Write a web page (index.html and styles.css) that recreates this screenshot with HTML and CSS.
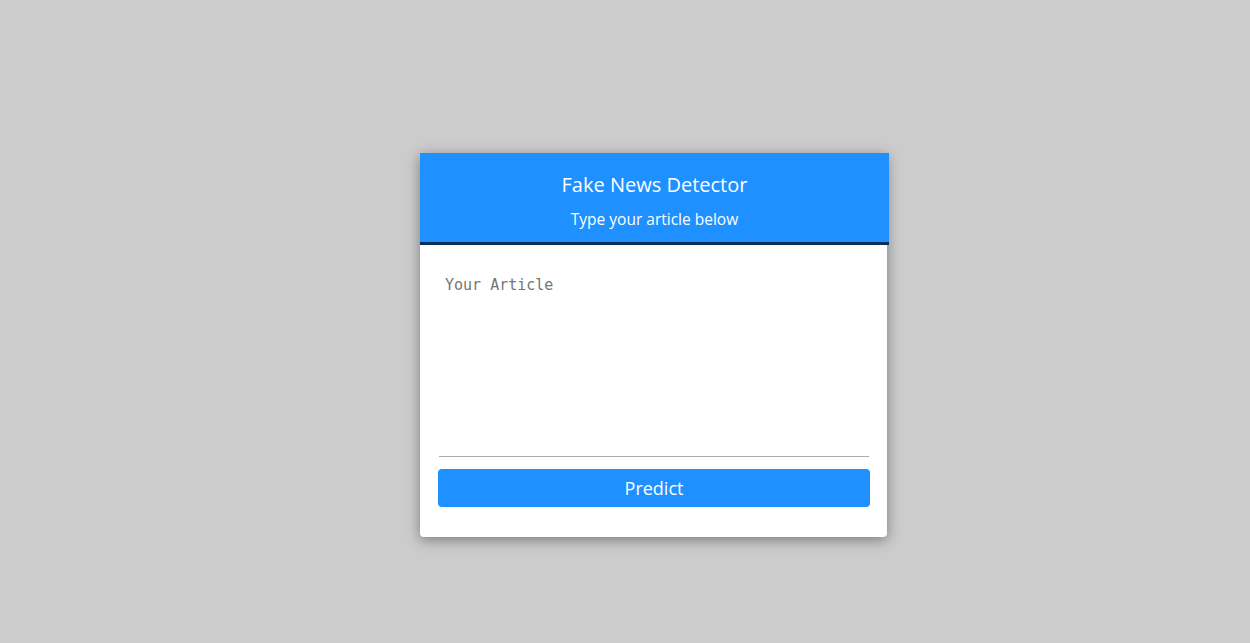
FILE: index.html
```html
<!DOCTYPE html>
<html>
<head>
<meta charset="utf-8">
<link rel="stylesheet" href="styles.css">
</head>
<body>
<div class="page">
  <div class="card">
    <div class="header">
      <h1 class="title">Fake News Detector</h1>
      <p class="subtitle">Type your article below</p>
    </div>
    <form class="body">
      <textarea class="article" placeholder="Your Article"></textarea>
      <button type="button" class="predict">Predict</button>
    </form>
  </div>
</div>
</body>
</html>
```
FILE: styles.css
```css
html, body {
  margin: 0;
  padding: 0;
  height: 100%;
  background: #cccccc;
  font-family: "Open Sans", "Noto Sans", sans-serif;
}
.page {
  padding-top: 153px;
  padding-left: 420px;
}
.card {
  width: 467px;
  background: #ffffff;
  border-radius: 0 0 4px 4px;
  box-shadow: 0 3px 14px rgba(0, 0, 0, 0.4);
}
.header {
  width: 469px;
  box-sizing: border-box;
  background: #1e90ff;
  border-bottom: 3px solid #0b2f55;
  color: #ffffff;
  text-align: center;
  padding-top: 19px;
  height: 92px;
}
.title {
  margin: 0;
  font-size: 20px;
  font-weight: 400;
  line-height: 26px;
}
.subtitle {
  margin: 11px 0 0;
  font-size: 15.5px;
  font-weight: 500;
  line-height: 20px;
}
.body {
  display: flex;
  flex-direction: column;
  padding: 0 17px 30px 18px;
}
.article {
  box-sizing: border-box;
  height: 212px;
  margin: 0 1px;
  border: none;
  border-bottom: 1px solid #aaaaaa;
  resize: none;
  outline: none;
  padding: 31px 6px 30px;
  font-family: "DejaVu Sans Mono", monospace;
  font-size: 15px;
  color: #333;
}
.article::placeholder {
  color: #757575;
}
.predict {
  margin-top: 12px;
  height: 38px;
  border: none;
  border-radius: 4px;
  background: #1e90ff;
  color: #ffffff;
  font-family: "Open Sans", "Noto Sans", sans-serif;
  font-size: 18px;
  padding-bottom: 2px;
}
```
